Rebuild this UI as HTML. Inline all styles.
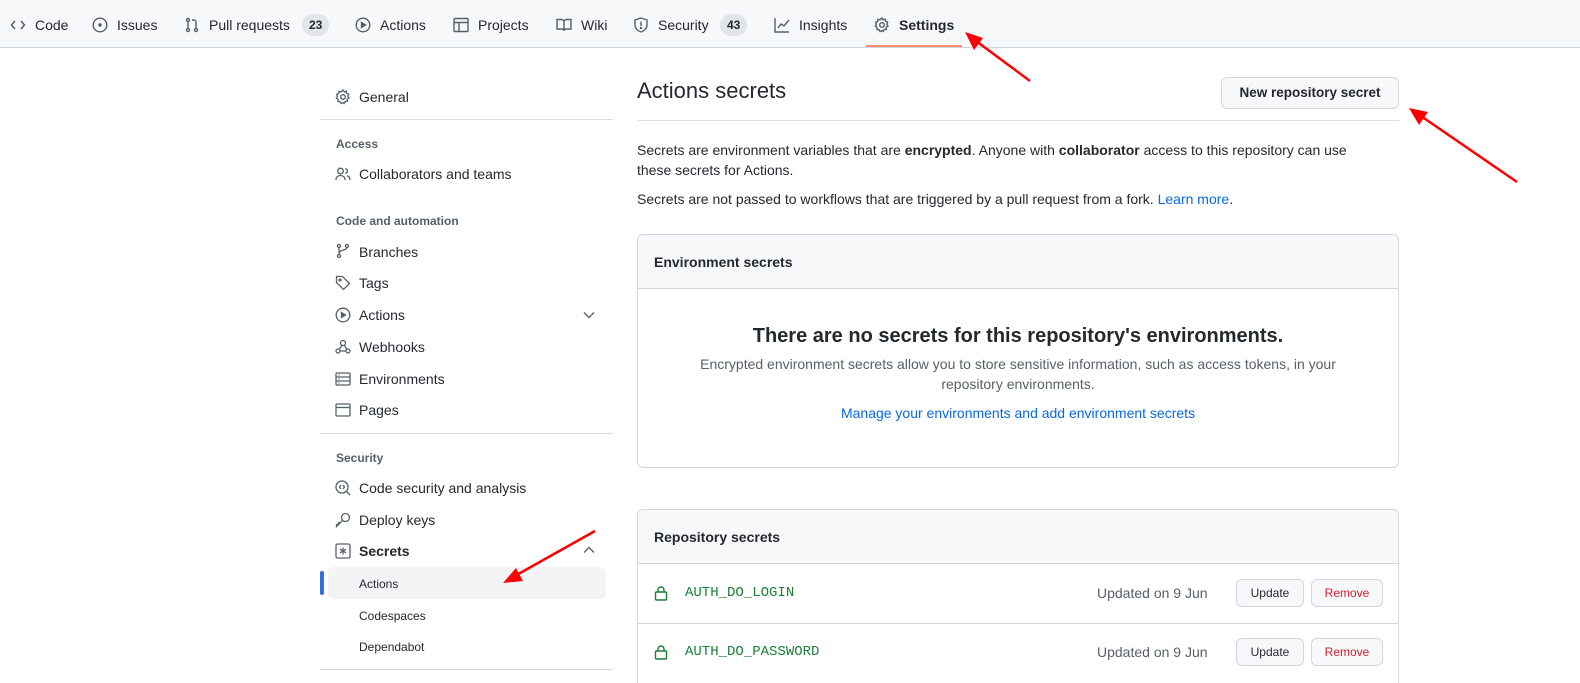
<!DOCTYPE html>
<html style="height:683px;overflow:hidden"><head><style>
*{box-sizing:border-box;margin:0;padding:0}
body{width:1580px;height:683px;overflow:hidden;background:#fff;font-family:"Liberation Sans",sans-serif;font-size:14px;color:#24292f;position:relative}
.a{position:absolute;white-space:nowrap}
.nav{position:absolute;left:0;top:0;width:1580px;height:48px;background:#f6f8fa;border-bottom:1px solid #d0d7de}
.ni{position:absolute;top:17px;font-size:14px;color:#24292f}
.cnt{position:absolute;top:14px;height:22px;padding:0 7px;border-radius:11px;background:#e1e4e8;font-size:12px;line-height:22px;font-weight:600}
.si{position:absolute;left:359px;font-size:14px;color:#24292f;line-height:18px}
.sh{position:absolute;left:336px;font-size:12px;font-weight:bold;color:#57606a}
.hr{position:absolute;height:1px;background:#d8dee4}
.btn{position:absolute;border:1px solid #d0d7de;background:#f6f8fa;border-radius:6px;font-size:12px;text-align:center}
svg{position:absolute;overflow:visible}
</style></head><body>
<div class="nav"></div>
<svg style="left:10px;top:17px" width="16" height="16" viewBox="0 0 16 16" fill="none" stroke="#57606a" stroke-width="1.5"><path d="M5 4L1.5 8 5 12M11 4l3.5 4-3.5 4"/></svg>
<div class="ni" style="left:35px">Code</div>
<svg style="left:92px;top:17px" width="16" height="16" viewBox="0 0 16 16" fill="none" stroke="#57606a" stroke-width="1.4"><circle cx="8" cy="8" r="6.8"/><circle cx="8" cy="8" r="1" fill="#57606a"/></svg>
<div class="ni" style="left:117px">Issues</div>
<svg style="left:184px;top:17px" width="16" height="16" viewBox="0 0 16 16" fill="none" stroke="#57606a" stroke-width="1.4"><circle cx="4" cy="3" r="1.5"/><circle cx="4" cy="13" r="1.5"/><circle cx="12" cy="13" r="1.5"/><path d="M4 4.5v7M12 11.5V5a2 2 0 0 0-2-2H8"/></svg>
<div class="ni" style="left:209px">Pull requests</div>
<div class="cnt" style="left:302px">23</div>
<svg style="left:355px;top:17px" width="16" height="16" viewBox="0 0 16 16" fill="none" stroke="#57606a" stroke-width="1.4"><circle cx="8" cy="8" r="6.8"/><path d="M6.5 5.5v5l4-2.5z" fill="#57606a"/></svg>
<div class="ni" style="left:380px">Actions</div>
<svg style="left:453px;top:17px" width="16" height="16" viewBox="0 0 16 16" fill="none" stroke="#57606a" stroke-width="1.4"><rect x="1" y="1.5" width="14" height="13" rx="1"/><path d="M1 5.5h14M6 5.5v9"/></svg>
<div class="ni" style="left:478px">Projects</div>
<svg style="left:556px;top:17px" width="16" height="16" viewBox="0 0 16 16" fill="none" stroke="#57606a" stroke-width="1.4"><path d="M1 2.5h4.5a2.5 2.5 0 0 1 2.5 2.5v9a2 2 0 0 0-2-2H1zM15 2.5h-4.5A2.5 2.5 0 0 0 8 5v9a2 2 0 0 1 2-2h5z"/></svg>
<div class="ni" style="left:581px">Wiki</div>
<svg style="left:633px;top:17px" width="16" height="16" viewBox="0 0 16 16" fill="none" stroke="#57606a" stroke-width="1.4"><path d="M8 1l6 2v5c0 3.5-3 6-6 7-3-1-6-3.5-6-7V3z"/><path d="M8 4.5v4.5"/><circle cx="8" cy="11" r=".5"/></svg>
<div class="ni" style="left:658px">Security</div>
<div class="cnt" style="left:720px">43</div>
<svg style="left:774px;top:17px" width="16" height="16" viewBox="0 0 16 16" fill="none" stroke="#57606a" stroke-width="1.4"><path d="M1 1v14h14M4 11l3-4 3 2 5-6"/></svg>
<div class="ni" style="left:799px">Insights</div>
<svg style="left:874px;top:17px" width="16" height="16" viewBox="0 0 16 16" fill="none" stroke="#57606a" stroke-width="1.4"><circle cx="8" cy="8" r="2.3"/><path d="M8 1l1.2 1.8 2.1-.6.4 2.1 2 .9-.9 2 1.2 1.8-1.8 1.2.1 2.2-2.1.2-1 1.9L8 13.6l-1.9 1-1-1.9-2.1-.2.1-2.2L1.3 9.1l1.2-1.8-.9-2 2-.9.4-2.1 2.1.6z"/></svg>
<div class="ni" style="left:899px;font-weight:bold">Settings</div>
<div class="a" style="left:866px;top:45px;width:96px;height:2px;background:#fd8c73"></div>

<!-- sidebar -->
<svg style="left:335px;top:89px" width="16" height="16" viewBox="0 0 16 16" fill="none" stroke="#57606a" stroke-width="1.3"><circle cx="8" cy="8" r="2.3"/><path d="M8 1l1.2 1.8 2.1-.6.4 2.1 2 .9-.9 2 1.2 1.8-1.8 1.2.1 2.2-2.1.2-1 1.9L8 13.6l-1.9 1-1-1.9-2.1-.2.1-2.2L1.3 9.1l1.2-1.8-.9-2 2-.9.4-2.1 2.1.6z"/></svg>
<div class="si" style="top:88px">General</div>
<div class="hr" style="left:320px;top:119px;width:293px"></div>
<div class="sh" style="top:137px">Access</div>
<svg style="left:335px;top:166px" width="16" height="16" viewBox="0 0 16 16" fill="none" stroke="#57606a" stroke-width="1.3"><circle cx="5.5" cy="5" r="2.8"/><path d="M1 14c0-3 2-4.5 4.5-4.5S10 11 10 14M10.5 2.5a2.6 2.6 0 0 1 0 5M12 9.8c1.8.5 3 2 3 4.2"/></svg>
<div class="si" style="top:165px">Collaborators and teams</div>
<div class="sh" style="top:214px">Code and automation</div>
<svg style="left:335px;top:243px" width="16" height="16" viewBox="0 0 16 16" fill="none" stroke="#57606a" stroke-width="1.3"><circle cx="4" cy="3" r="1.5"/><circle cx="4" cy="13" r="1.5"/><circle cx="12" cy="3" r="1.5"/><path d="M4 4.5v7M12 4.5c0 3-8 2-8 6"/></svg>
<div class="si" style="top:243px">Branches</div>
<svg style="left:335px;top:275px" width="16" height="16" viewBox="0 0 16 16" fill="none" stroke="#57606a" stroke-width="1.3"><path d="M1.5 1.5h6l7 7-6 6-7-7z"/><circle cx="5" cy="5" r="1"/></svg>
<div class="si" style="top:274px">Tags</div>
<svg style="left:335px;top:307px" width="16" height="16" viewBox="0 0 16 16" fill="none" stroke="#57606a" stroke-width="1.3"><circle cx="8" cy="8" r="6.8"/><path d="M6.5 5.5v5l4-2.5z" fill="#57606a"/></svg>
<div class="si" style="top:306px">Actions</div>
<svg style="left:583px;top:310px" width="12" height="10" viewBox="0 0 12 10" fill="none" stroke="#57606a" stroke-width="1.4"><path d="M1 2.5l5 5 5-5"/></svg>
<svg style="left:335px;top:339px" width="16" height="16" viewBox="0 0 16 16" fill="none" stroke="#57606a" stroke-width="1.3"><circle cx="8" cy="4" r="2.5"/><circle cx="3" cy="12" r="2"/><circle cx="13" cy="12" r="2"/><path d="M7 6.5L4 10.5M5 12h6M9.5 6.5l2.5 4"/></svg>
<div class="si" style="top:338px">Webhooks</div>
<svg style="left:335px;top:371px" width="16" height="16" viewBox="0 0 16 16" fill="none" stroke="#57606a" stroke-width="1.3"><rect x="1" y="2" width="14" height="12" rx="1"/><path d="M1 6h14M1 10h14M3.5 4h1M3.5 8h1M3.5 12h1"/></svg>
<div class="si" style="top:370px">Environments</div>
<svg style="left:335px;top:402px" width="16" height="16" viewBox="0 0 16 16" fill="none" stroke="#57606a" stroke-width="1.3"><rect x="1" y="2" width="14" height="12" rx="1"/><path d="M1 5.5h14"/></svg>
<div class="si" style="top:401px">Pages</div>
<div class="hr" style="left:320px;top:433px;width:293px"></div>
<div class="sh" style="top:451px">Security</div>
<svg style="left:335px;top:480px" width="16" height="16" viewBox="0 0 16 16" fill="none" stroke="#57606a" stroke-width="1.3"><circle cx="7" cy="7" r="6"/><path d="M11.5 11.5L15 15M6 5L4.5 7 6 9M8 5l1.5 2L8 9"/></svg>
<div class="si" style="top:479px">Code security and analysis</div>
<svg style="left:335px;top:512px" width="16" height="16" viewBox="0 0 16 16" fill="none" stroke="#57606a" stroke-width="1.3"><circle cx="10.5" cy="5.5" r="4"/><path d="M7.5 8.5L1.5 14.5v-2h2v-2h2"/></svg>
<div class="si" style="top:511px">Deploy keys</div>
<svg style="left:335px;top:543px" width="16" height="16" viewBox="0 0 16 16" fill="none" stroke="#57606a" stroke-width="1.3"><rect x="1" y="1" width="14" height="14" rx="1.5"/><path d="M8 4.5v7M5 6.2l6 3.6M11 6.2l-6 3.6"/></svg>
<div class="si" style="top:542px;font-weight:bold">Secrets</div>
<svg style="left:583px;top:545px" width="12" height="10" viewBox="0 0 12 10" fill="none" stroke="#57606a" stroke-width="1.4"><path d="M1 7.5l5-5 5 5"/></svg>
<div class="a" style="left:328px;top:567px;width:278px;height:32px;background:#f3f4f6;border-radius:6px"></div>
<div class="a" style="left:320px;top:571px;width:4px;height:24px;background:#2f6fe0;border-radius:2px"></div>
<div class="si" style="top:575px;font-size:12px">Actions</div>
<div class="si" style="top:607px;font-size:12px">Codespaces</div>
<div class="si" style="top:638px;font-size:12px">Dependabot</div>
<div class="hr" style="left:320px;top:669px;width:293px"></div>

<!-- main -->
<div class="a" style="left:637px;top:78px;font-size:22px">Actions secrets</div>
<div class="btn" style="left:1221px;top:77px;width:178px;height:32px;line-height:30px;font-size:13.5px;font-weight:bold">New repository secret</div>
<div class="hr" style="left:637px;top:120px;width:762px"></div>
<div class="a" style="left:637px;top:140px;line-height:20px;white-space:normal;width:740px">Secrets are environment variables that are <b>encrypted</b>. Anyone with <b>collaborator</b> access to this repository can use these secrets for Actions.</div>
<div class="a" style="left:637px;top:191px">Secrets are not passed to workflows that are triggered by a pull request from a fork. <span style="color:#0969da">Learn more</span>.</div>

<div class="a" style="left:637px;top:234px;width:762px;height:234px;border:1px solid #d0d7de;border-radius:6px;overflow:hidden;white-space:normal">
<div style="height:54px;background:#f6f8fa;border-bottom:1px solid #d0d7de;padding:19px 16px;font-weight:600">Environment secrets</div>
<div style="text-align:center;margin-top:36px;font-size:20px;font-weight:bold">There are no secrets for this repository's environments.</div>
<div style="text-align:center;margin:6px auto 0;width:680px;color:#57606a;line-height:20px">Encrypted environment secrets allow you to store sensitive information, such as access tokens, in your repository environments.</div>
<div style="text-align:center;margin-top:11px;color:#0969da">Manage your environments and add environment secrets</div>
</div>

<div class="a" style="left:637px;top:509px;width:762px;height:174px;border:1px solid #d0d7de;border-bottom:none;border-radius:6px 6px 0 0;overflow:hidden">
<div style="height:54px;background:#f6f8fa;border-bottom:1px solid #d0d7de;padding:19px 16px;font-weight:600">Repository secrets</div>
<div style="height:60px;border-bottom:1px solid #d0d7de"></div>
</div>
<svg style="left:654px;top:585px" width="14" height="16" viewBox="0 0 14 16" fill="none" stroke="#1a7f37" stroke-width="1.4"><rect x="1.5" y="7" width="11" height="8" rx="1"/><path d="M4 7V5a3 3 0 0 1 6 0v2"/></svg>
<div class="a" style="left:685px;top:585px;font-family:'Liberation Mono',monospace;color:#1a7f37;font-size:14px">AUTH_DO_LOGIN</div>
<div class="a" style="left:1097px;top:585px;color:#57606a">Updated on 9 Jun</div>
<div class="btn" style="left:1236px;top:579px;width:68px;height:28px;line-height:26px">Update</div>
<div class="btn" style="left:1311px;top:579px;width:72px;height:28px;line-height:26px;color:#cf222e">Remove</div>
<svg style="left:654px;top:644px" width="14" height="16" viewBox="0 0 14 16" fill="none" stroke="#1a7f37" stroke-width="1.4"><rect x="1.5" y="7" width="11" height="8" rx="1"/><path d="M4 7V5a3 3 0 0 1 6 0v2"/></svg>
<div class="a" style="left:685px;top:644px;font-family:'Liberation Mono',monospace;color:#1a7f37;font-size:14px">AUTH_DO_PASSWORD</div>
<div class="a" style="left:1097px;top:644px;color:#57606a">Updated on 9 Jun</div>
<div class="btn" style="left:1236px;top:638px;width:68px;height:28px;line-height:26px">Update</div>
<div class="btn" style="left:1311px;top:638px;width:72px;height:28px;line-height:26px;color:#cf222e">Remove</div>

<!-- arrows -->
<svg style="left:0;top:0" width="1580" height="683">
<g stroke="#f00" stroke-width="2.5" fill="#f00">
<line x1="1030" y1="81" x2="972" y2="38"/><polygon points="965,32 983,38 974,50" stroke="none"/>
<line x1="1517" y1="182" x2="1418" y2="114"/><polygon points="1409,108 1428,112 1419,125" stroke="none"/>
<line x1="595" y1="531" x2="513" y2="577"/><polygon points="503,583 516,568 523,581" stroke="none"/>
</g></svg>
</body></html>
